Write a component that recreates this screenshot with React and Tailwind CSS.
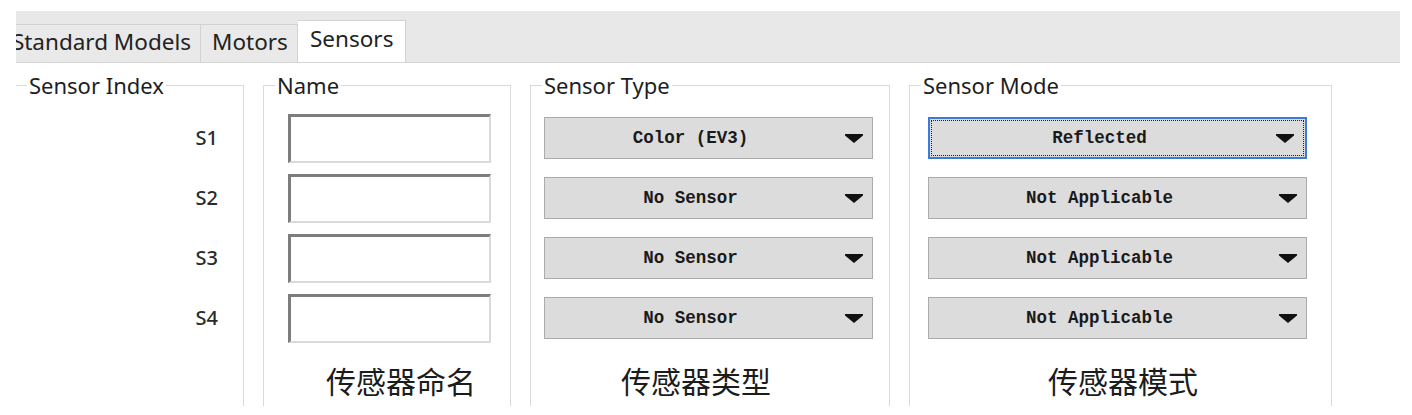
import React from "react";

const uiFont = { fontFamily: '"Noto Sans", "Open Sans", sans-serif' };
const monoFont = { fontFamily: '"Liberation Mono", "DejaVu Sans Mono", monospace' };
const cjkFont = { fontFamily: '"Noto Sans CJK SC", sans-serif' };

const rows = [
  { id: "S1", type: "Color (EV3)", mode: "Reflected", focused: true },
  { id: "S2", type: "No Sensor", mode: "Not Applicable" },
  { id: "S3", type: "No Sensor", mode: "Not Applicable" },
  { id: "S4", type: "No Sensor", mode: "Not Applicable" },
];

const Arrow = () => (
  <svg width="18" height="9" viewBox="0 0 18 9">
    <path d="M0 0 H18 V1.5 L9 9 L0 1.5 Z" fill="#111" />
  </svg>
);

const Dropdown = ({ value, width, focused }) => (
  <div
    className={
      focused
        ? "flex h-[42px] border-2 border-[#3b7ad6] bg-[#dcdcdc] p-px"
        : "flex h-[42px] border border-[#ababab] bg-[#dcdcdc]"
    }
    style={{ width }}
  >
    <div
      className={
        focused
          ? "flex flex-1 items-center border border-dotted border-[#222]"
          : "flex flex-1 items-center"
      }
    >
      <span className="flex-1 text-center text-[17.5px] font-bold text-[#1a1a1a]" style={monoFont}>
        {value}
      </span>
      <span className="flex w-[36px] justify-center">
        <Arrow />
      </span>
    </div>
  </div>
);

const Group = ({ title, width, noLeft, children, footer }) => (
  <fieldset
    className={
      noLeft
        ? "h-[334px] border-t border-r border-[#d9d9d9]"
        : "h-[334px] border-t border-l border-r border-[#d9d9d9]"
    }
    style={{ width }}
  >
    <legend className="ml-[11px] px-[2px] text-[22px] leading-[26px] text-[#1e1e1e]" style={uiFont}>
      {title}
    </legend>
    <div className="pt-[10px]">{children}</div>
    {footer}
  </fieldset>
);

export default function App() {
  return (
    <div className="h-[415px] w-[1412px] overflow-hidden bg-white">
      <div className="pl-[16px] pt-[11px]">
        <div
          className="flex h-[52px] w-[1384px] items-end overflow-hidden border-b border-[#d4d4d4] bg-[#e8e8e8] text-[22.5px] text-[#222]"
          style={uiFont}
        >
          <div className="flex h-[38px] w-[185px] items-center justify-end overflow-hidden border-r border-t border-[#d2d2d2] bg-[#e9e9e9] pb-[3px] pr-[9px]">
            <span className="whitespace-nowrap">Standard Models</span>
          </div>
          <div className="flex h-[38px] w-[97px] items-center border-r border-t border-[#d2d2d2] bg-[#e9e9e9] pb-[3px] pl-[11px]">
            Motors
          </div>
          <div className="-mb-px flex h-[43px] w-[108px] items-center border-r border-t border-[#d2d2d2] bg-white pb-[6px] pl-[12px]">
            Sensors
          </div>
        </div>
      </div>

      <div className="ml-[16px] mt-[9px] flex gap-[19px]">
        <Group title="Sensor Index" width="228px" noLeft>
          {rows.map((r) => (
            <div key={r.id} className="flex h-[60px] items-center justify-end pr-[25px] text-[20px] font-medium text-[#2a2a2a]" style={uiFont}>
              {r.id}
            </div>
          ))}
        </Group>

        <Group
          title="Name"
          width="248px"
          footer={
            <div className="mt-[12px] pl-[62px] text-[30px] leading-[40px] text-[#1c1c1c]" style={cjkFont}>
              传感器命名
            </div>
          }
        >
          {rows.map((r) => (
            <div key={r.id} className="flex h-[60px] items-center pl-[24px]">
              <div className="h-[49px] w-[203px] border-b-2 border-l-[3px] border-r-2 border-t-[3px] border-b-[#dadada] border-l-[#7d7d7d] border-r-[#dadada] border-t-[#7d7d7d] bg-white" />
            </div>
          ))}
        </Group>

        <Group
          title="Sensor Type"
          width="360px"
          footer={
            <div className="mt-[12px] pl-[90px] text-[30px] leading-[40px] text-[#1c1c1c]" style={cjkFont}>
              传感器类型
            </div>
          }
        >
          {rows.map((r) => (
            <div key={r.id} className="flex h-[60px] items-center pl-[13px]">
              <Dropdown value={r.type} width="329px" />
            </div>
          ))}
        </Group>

        <Group
          title="Sensor Mode"
          width="423px"
          footer={
            <div className="mt-[12px] pl-[138px] text-[30px] leading-[40px] text-[#1c1c1c]" style={cjkFont}>
              传感器模式
            </div>
          }
        >
          {rows.map((r) => (
            <div key={r.id} className="flex h-[60px] items-center pl-[18px]">
              <Dropdown value={r.mode} width="379px" focused={r.focused} />
            </div>
          ))}
        </Group>
      </div>
    </div>
  );
}
